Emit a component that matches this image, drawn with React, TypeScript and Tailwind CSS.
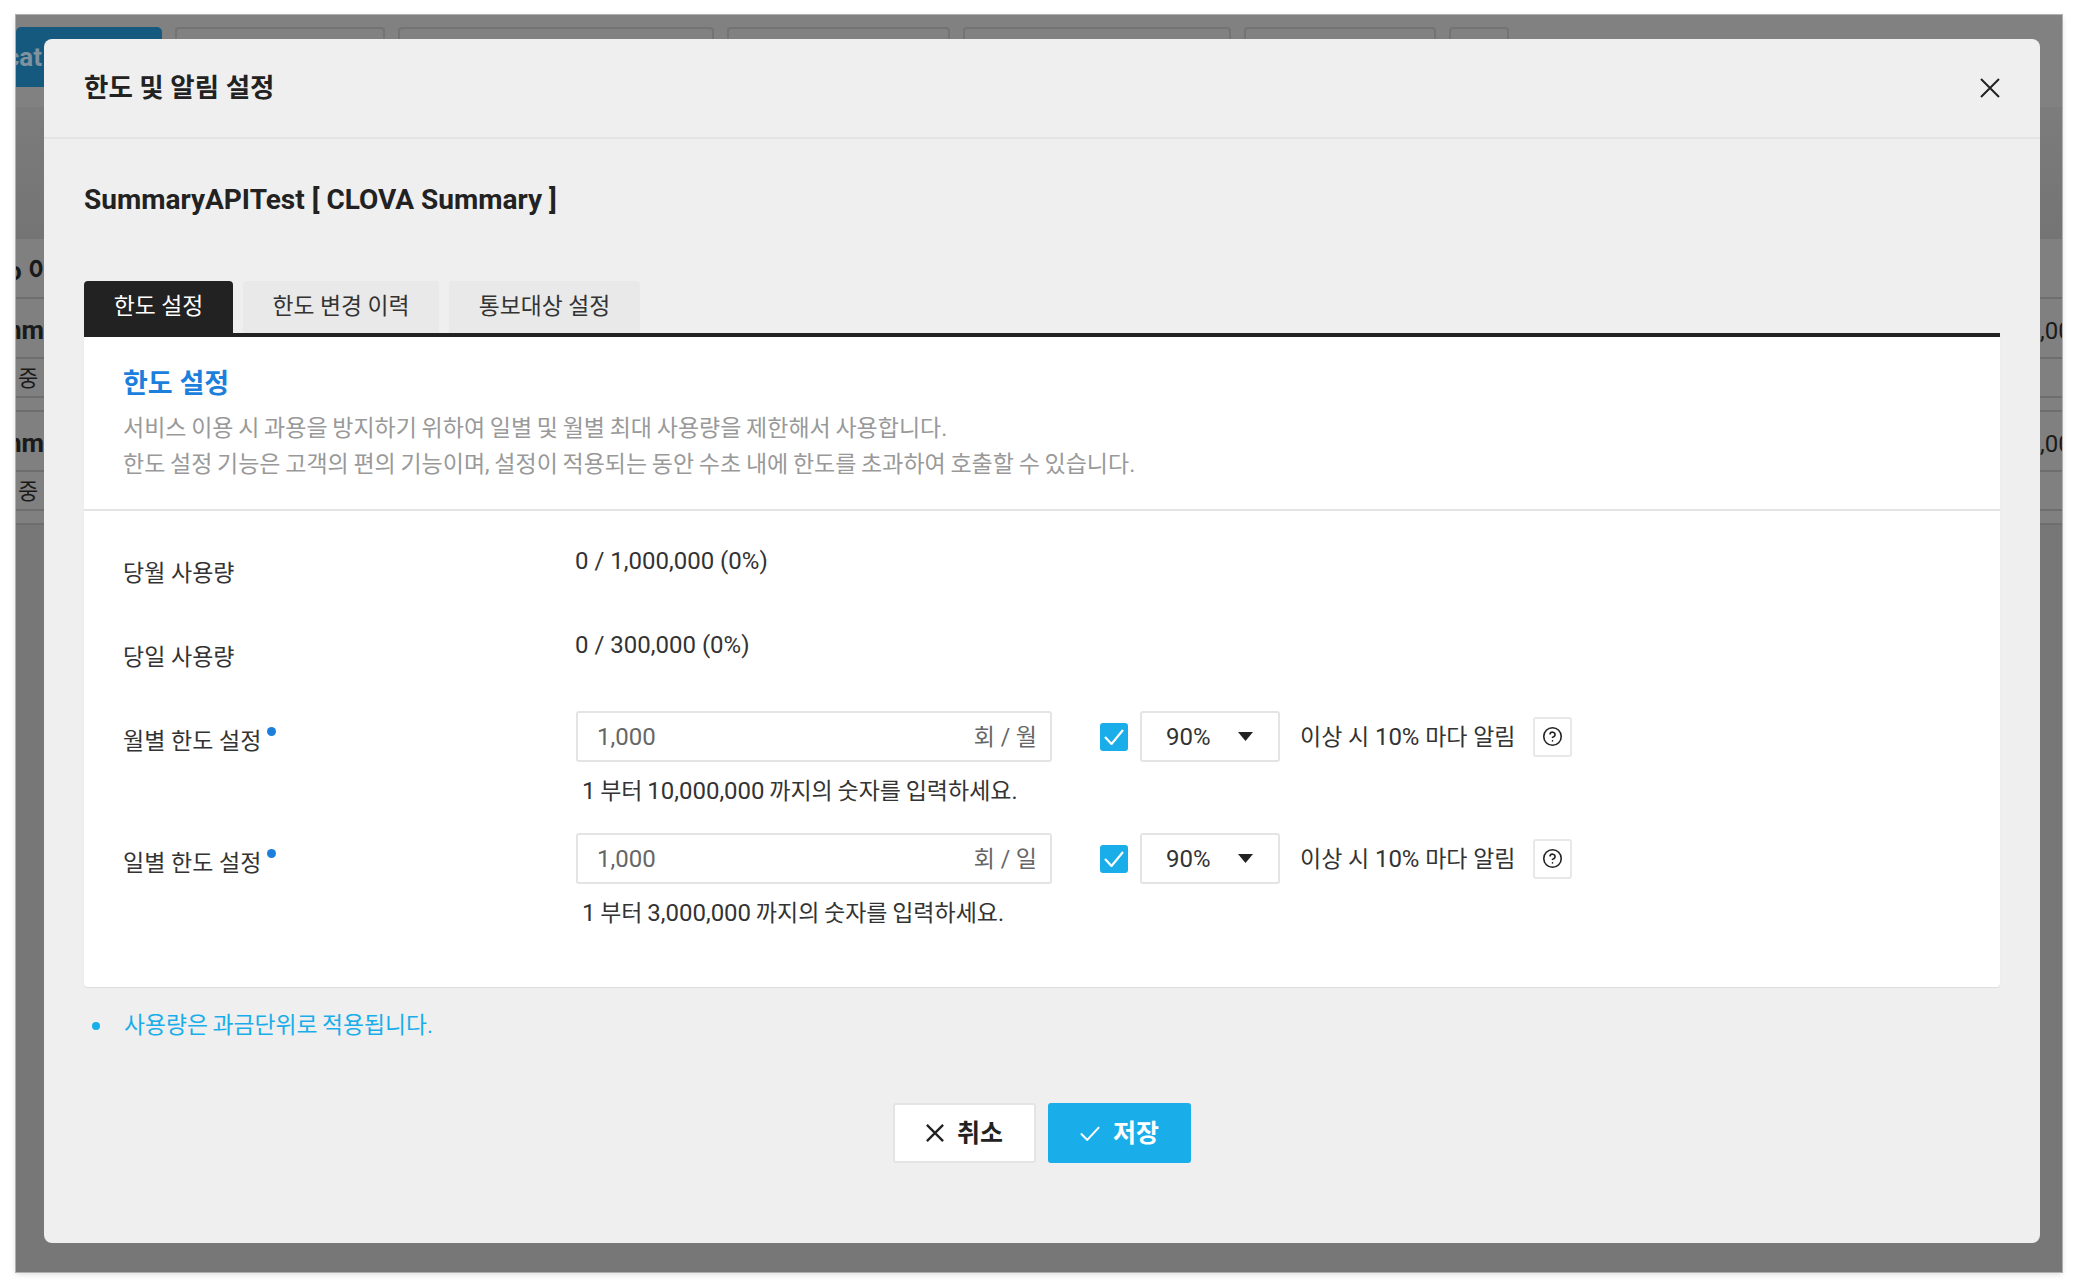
import React from 'react';
import { CircleHelp } from 'lucide-react';

const CloseIcon = ({ size, width = 2 }: { size: number; width?: number }) => (
  <svg width={size} height={size} viewBox="0 0 20 20" fill="none" stroke="currentColor" strokeWidth={width}>
    <path d="M1 1L19 19M19 1L1 19" />
  </svg>
);

// latin digits sit a little larger than the hangul next to them
const Num = ({ children }: { children: React.ReactNode }) => <span className="text-[24px]">{children}</span>;

const LimitRow = ({ label, unit, limit }: { label: string; unit: string; limit: string }) => (
  <div className="flex">
    <div className="w-[453px] pt-[15px] text-[23px] leading-[32px] text-[#333]">
      {label}
      <span className="ml-[6px] inline-block h-[9px] w-[9px] -translate-y-[13px] rounded-full bg-[#1c7fdc]"></span>
    </div>
    <div>
      <div className="flex items-center">
        <div className="flex h-[51px] w-[476px] items-center justify-between rounded-[3px] border-2 border-[#e4e4e4] bg-white pl-[19px] pr-[13px]">
          <span className="text-[24px] text-[#666]">1,000</span>
          <span className="pt-[4px] text-[23px] text-[#666]">{unit}</span>
        </div>
        <div className="ml-[48px] flex h-[28px] w-[28px] items-center justify-center rounded-[3px] bg-[#19aeea] text-white">
          <svg width="20" height="16" viewBox="0 0 20 16" fill="none" stroke="currentColor" strokeWidth="2.2">
            <path d="M1 8L7.5 15L19 1" />
          </svg>
        </div>
        <div className="ml-[12px] flex h-[51px] w-[140px] items-center justify-between rounded-[3px] border-2 border-[#e4e4e4] bg-white pl-[24px] pr-[25px] text-[24px] text-[#333]">
          <span>90%</span>
          <svg width="15" height="9" viewBox="0 0 15 9" fill="#222">
            <path d="M0 0H15L7.5 9Z" />
          </svg>
        </div>
        <span className="ml-[20px] w-[212px] whitespace-nowrap pt-[2px] text-[23px] text-[#333]">이상 시 <Num>10%</Num> 마다 알림</span>
        <div className="ml-[21px] flex h-[40px] w-[39px] items-center justify-center rounded-[3px] border-2 border-[#e8e8e8] bg-white text-[#222]">
          <CircleHelp size={21} strokeWidth={1.8} />
        </div>
      </div>
      <div className="mt-[13px] pl-[6px] text-[23px] leading-[32px] text-[#333] [word-spacing:-1px]">
        <Num>1</Num> 부터 <Num>{limit}</Num> 까지의 숫자를 입력하세요.
      </div>
    </div>
  </div>
);

export default function App() {
  return (
    <div className="h-[1288px] bg-white px-[16px] pb-[16px] pt-[15px] font-['Roboto','Noto_Sans_CJK_KR',sans-serif]">
      <div className="relative h-[1257px] overflow-hidden bg-[#777] shadow-[0_0_0_1px_#b0b0b0,0_2px_6px_rgba(0,0,0,0.15)]">
        {/* Page behind the dialog */}
        <div className="flex h-[92px] gap-[13px] bg-[#818181] pt-[12px]">
          <div className="flex h-[60px] w-[146px] items-center justify-end overflow-hidden rounded-t-[5px] bg-[#155a7e] pr-[120px] text-[26px] font-bold whitespace-nowrap text-[#7f929e]">cat</div>
          <div className="h-[60px] w-[210px] rounded-t-[4px] border-2 border-[#737373]"></div>
          <div className="h-[60px] w-[316px] rounded-t-[4px] border-2 border-[#737373]"></div>
          <div className="h-[60px] w-[223px] rounded-t-[4px] border-2 border-[#737373]"></div>
          <div className="h-[60px] w-[268px] rounded-t-[4px] border-2 border-[#737373]"></div>
          <div className="h-[60px] w-[192px] rounded-t-[4px] border-2 border-[#737373]"></div>
          <div className="h-[60px] w-[60px] rounded-t-[4px] border-2 border-[#737373]"></div>
        </div>
        <div className="h-[132px] bg-gradient-to-b from-[#7c7c7c] to-[#747474]"></div>
        <div className="h-[60px] border-b-2 border-[#6e6e6e] bg-[#808080] text-[26px] font-bold text-[#1a1a1a]">
          <div className="flex w-[36px] justify-end overflow-hidden whitespace-nowrap pt-[13px]">o 이</div>
        </div>
        {[0, 1].map((i) => (
          <div key={i} className="bg-[#808080]">
            <div className="flex h-[60px] items-center justify-between border-b-2 border-[#6e6e6e] pt-[5px] text-[26px] text-[#1a1a1a]">
              <div className="flex w-[28px] justify-end overflow-hidden font-bold whitespace-nowrap">nm</div>
              <div className="w-[22px] overflow-hidden whitespace-nowrap text-[24px]">,000</div>
            </div>
            <div className="h-[39px] border-b-2 border-[#6e6e6e] pl-[2px] pt-[3px] text-[22px] text-[#1a1a1a]">중</div>
            <div className="h-[14px] border-b-2 border-[#6e6e6e]"></div>
          </div>
        ))}

        {/* Dialog */}
        <div className="absolute left-[28px] top-[24px] flex h-[1204px] w-[1996px] flex-col rounded-[8px] bg-[#efefef]">
          <div className="flex h-[100px] items-center justify-between border-b-2 border-[#e4e4e4] pl-[40px] pr-[40px]">
            <h1 className="text-[26.5px] font-bold text-[#222]">한도 및 알림 설정</h1>
            <span className="text-[#222]"><CloseIcon size={20} /></span>
          </div>
          <div className="flex flex-1 flex-col px-[40px]">
            <h2 className="mt-[41px] text-[28px] leading-[40px] font-bold text-[#222]">SummaryAPITest [ CLOVA Summary ]</h2>
            <div className="mt-[61px] flex gap-[10px] text-[22.8px]">
              <div className="flex h-[52px] w-[149px] items-center justify-center rounded-t-[4px] bg-[#222] text-white">한도 설정</div>
              <div className="flex h-[52px] w-[196px] items-center justify-center rounded-t-[4px] bg-[#e9e9e9] text-[#333]">한도 변경 이력</div>
              <div className="flex h-[52px] w-[191px] items-center justify-center rounded-t-[4px] bg-[#e9e9e9] text-[#333]">통보대상 설정</div>
            </div>
            <div className="h-[654px] rounded-b-[4px] border-t-4 border-[#222] bg-white shadow-[0_1px_1px_rgba(0,0,0,0.08)]">
              <div className="h-[174px] border-b-2 border-[#e4e4e4] px-[39px] pt-[27px]">
                <h3 className="text-[27px] leading-[40px] font-bold text-[#1c7fdc]">한도 설정</h3>
                <p className="mt-[7px] text-[23px] leading-[36px] text-[#999] [word-spacing:-1px]">
                  서비스 이용 시 과용을 방지하기 위하여 일별 및 월별 최대 사용량을 제한해서 사용합니다.
                  <br />
                  한도 설정 기능은 고객의 편의 기능이며, 설정이 적용되는 동안 수초 내에 한도를 초과하여 호출할 수 있습니다.
                </p>
              </div>
              <div className="flex flex-col px-[39px] pt-[34px]">
                <div className="flex h-[84px]">
                  <div className="w-[452px] pt-[13px] text-[23px] leading-[32px] text-[#333]">당월 사용량</div>
                  <div className="text-[24px] leading-[32px] text-[#333]">0 / 1,000,000 (0%)</div>
                </div>
                <div className="flex h-[82px]">
                  <div className="w-[452px] pt-[13px] text-[23px] leading-[32px] text-[#333]">당일 사용량</div>
                  <div className="text-[24px] leading-[32px] text-[#333]">0 / 300,000 (0%)</div>
                </div>
                <div className="flex flex-col gap-[25px]">
                  <LimitRow label="월별 한도 설정" unit="회 / 월" limit="10,000,000" />
                  <LimitRow label="일별 한도 설정" unit="회 / 일" limit="3,000,000" />
                </div>
              </div>
            </div>
            <div className="mt-[23px] flex items-center text-[22.8px] leading-[32px] text-[#19aeea]">
              <span className="ml-[8px] h-[8px] w-[8px] rounded-full bg-[#19aeea]"></span>
              <span className="ml-[24px] [word-spacing:-1px]">사용량은 과금단위로 적용됩니다.</span>
            </div>
            <div className="mt-[61px] flex justify-center gap-[12px]">
              <button className="flex h-[60px] w-[143px] items-center justify-center gap-[13px] rounded-[3px] border-2 border-[#e4e4e4] bg-white text-[25px] font-bold text-[#222]">
                <CloseIcon size={18} width={2.6} />
                <span className="pt-[2px]">취소</span>
              </button>
              <button className="flex h-[60px] w-[143px] items-center justify-center gap-[13px] rounded-[3px] bg-[#19aeea] text-[25px] font-bold text-white">
                <svg width="20" height="15" viewBox="0 0 22 16" fill="none" stroke="currentColor" strokeWidth="2.2">
                  <path d="M1 8L8 15L21 1" />
                </svg>
                <span className="pt-[2px]">저장</span>
              </button>
            </div>
          </div>
        </div>
      </div>
    </div>
  );
}
